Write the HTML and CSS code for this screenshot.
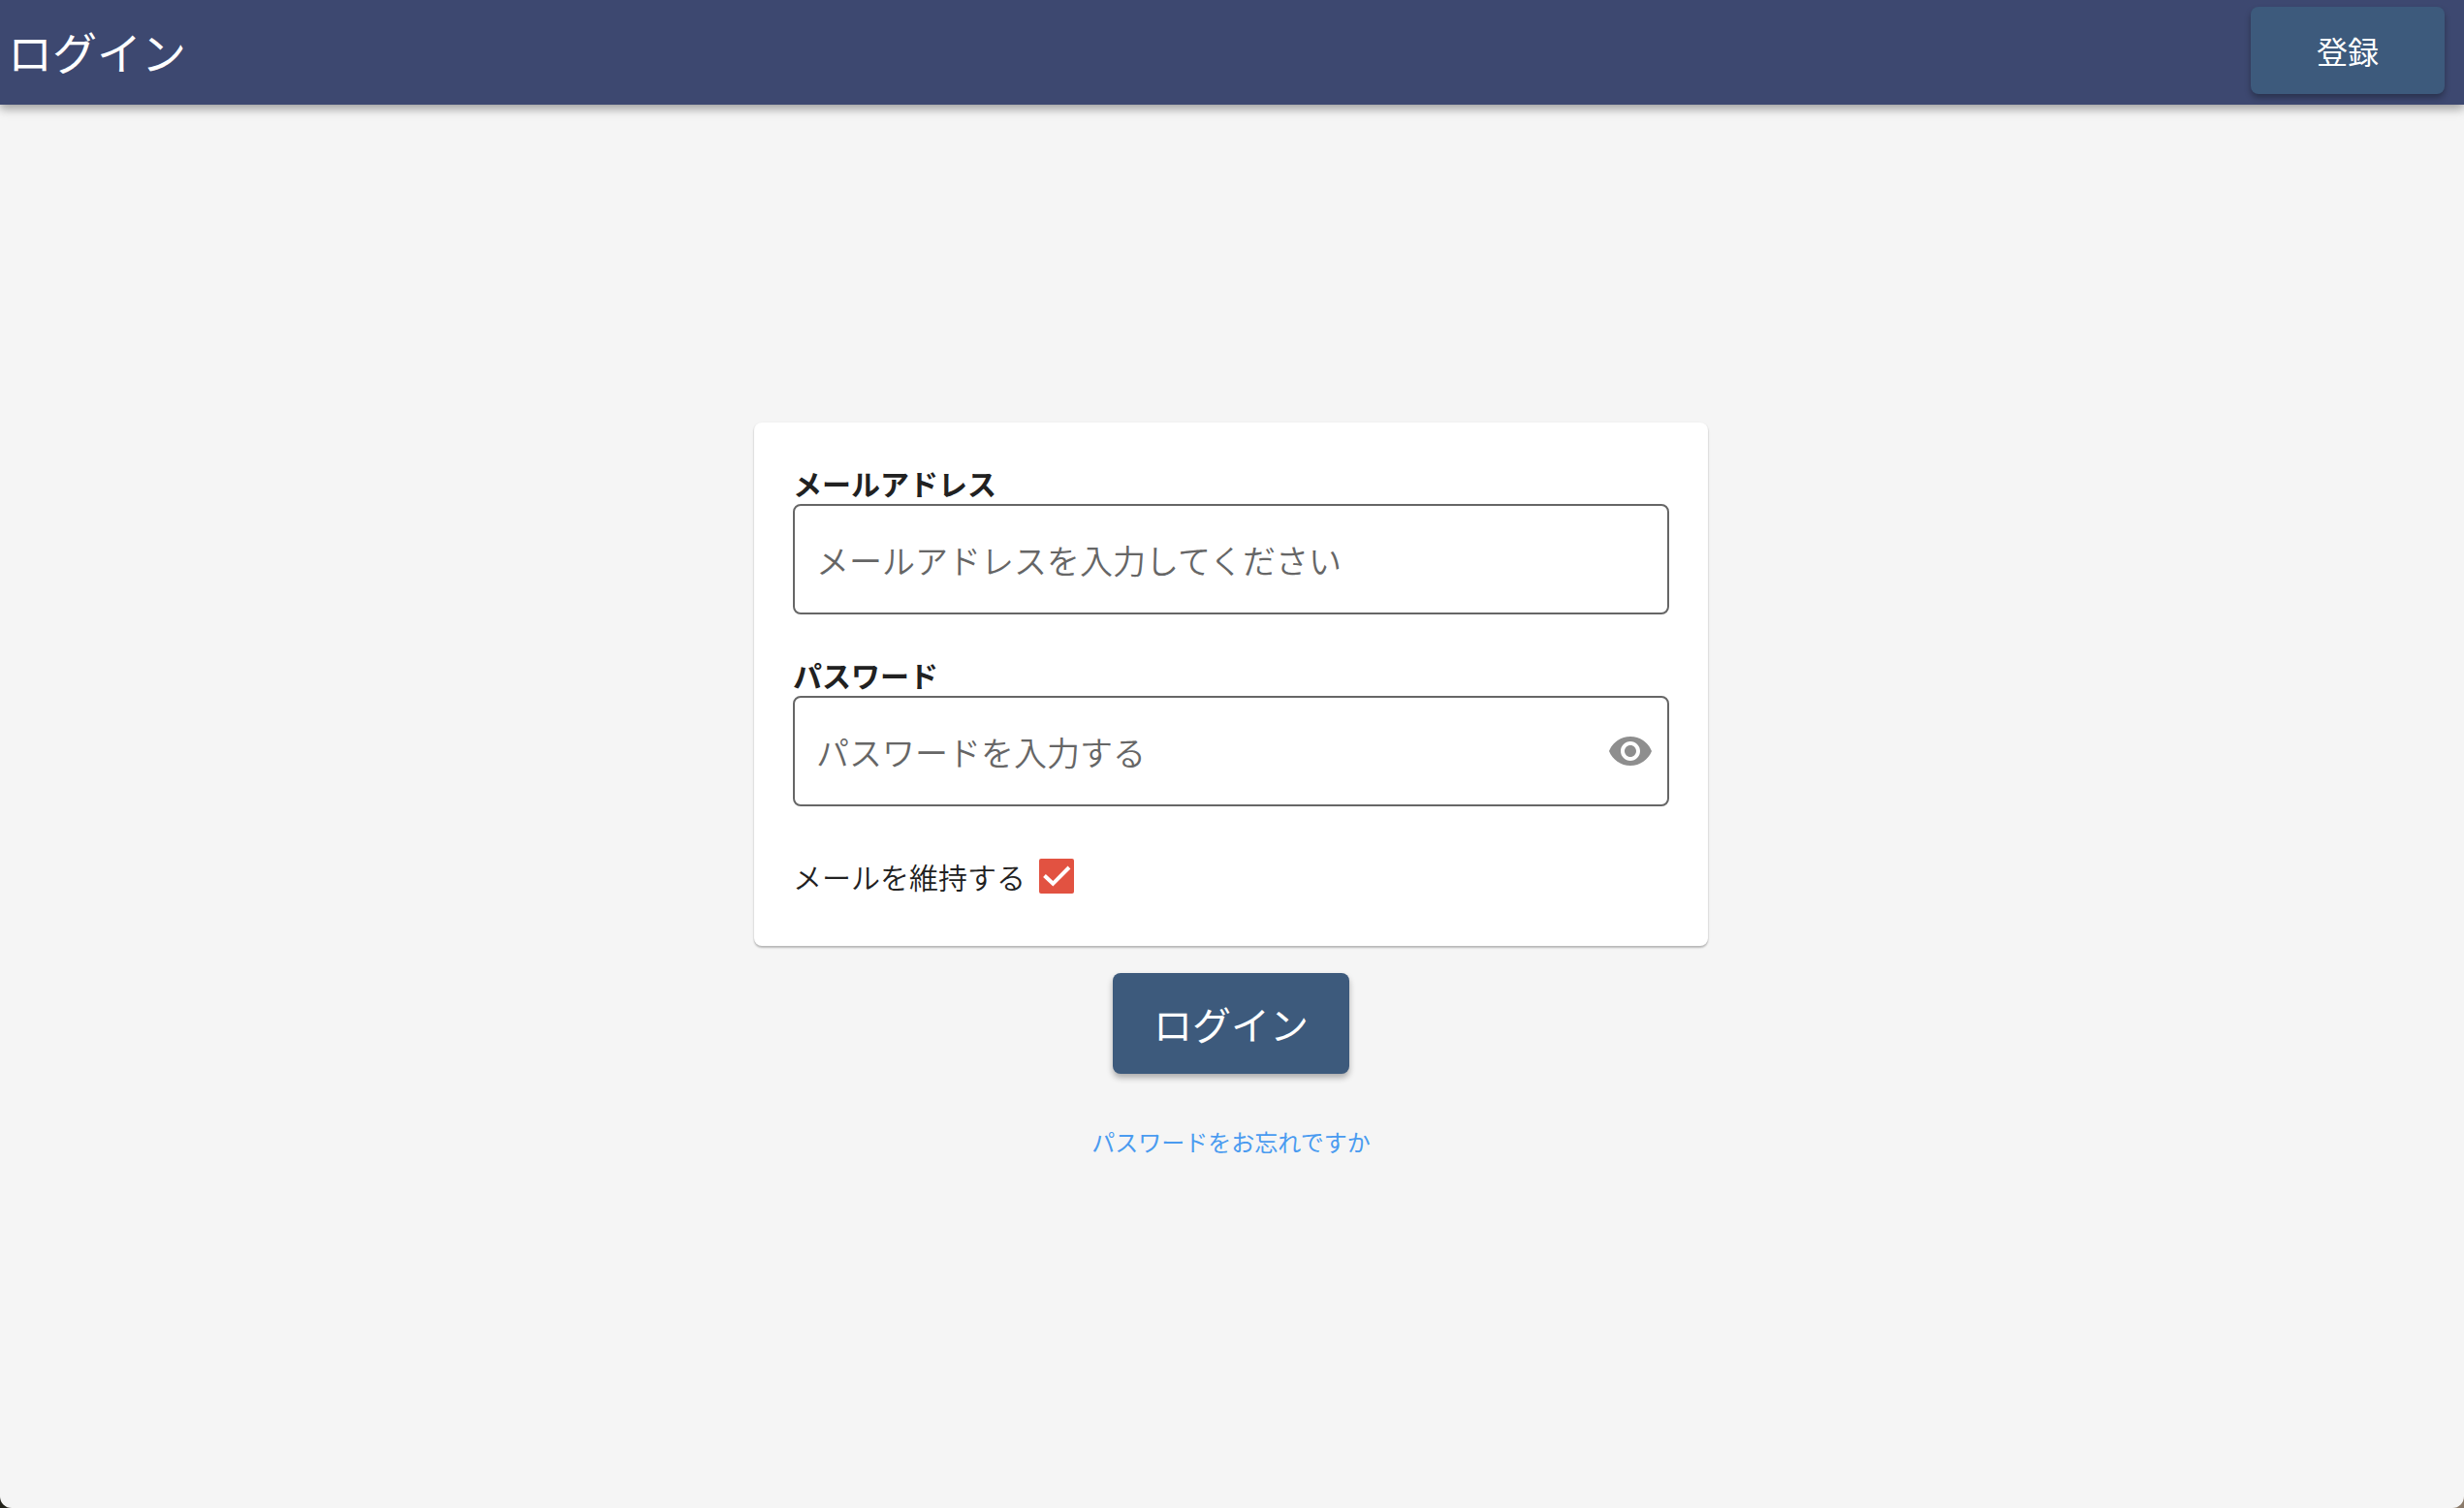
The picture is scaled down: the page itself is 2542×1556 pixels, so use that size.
FILE: index.html
```html
<!DOCTYPE html>
<html lang="ja">
<head>
  <meta charset="UTF-8">
  <meta name="viewport" content="width=device-width, initial-scale=1">
  <title>ログイン</title>
  <link rel="stylesheet" href="styles.css">
</head>
<body>
  <header class="toolbar">
    <h1>ログイン</h1>
    <button type="button" class="btn register-btn">登録</button>
  </header>

  <main>
    <form class="login-form">
      <section class="card">
        <!-- Email -->
        <div class="field">
          <label for="email">メールアドレス</label>
          <input type="email" id="email" placeholder="メールアドレスを入力してください">
        </div>

        <!-- Password -->
        <div class="field">
          <label for="password">パスワード</label>
          <div class="password-box">
            <input type="password" id="password" placeholder="パスワードを入力する">
            <button type="button" class="eye-btn" aria-label="パスワードを表示">
              <svg viewBox="0 0 24 24" aria-hidden="true">
                <path d="M12 4.500C7 4.500 2.730 7.610 1 12c1.730 4.390 6 7.500 11 7.500s9.270-3.110 11-7.500c-1.730-4.390-6-7.500-11-7.500zM12 17c-2.760 0-5-2.240-5-5s2.240-5 5-5 5 2.240 5 5-2.240 5-5 5zm0-8c-1.660 0-3 1.340-3 3s1.340 3 3 3 3-1.340 3-3-1.340-3-3-3z"/>
              </svg>
            </button>
          </div>
        </div>

        <!-- Remember email -->
        <div class="keep-row">
          <label for="keep">メールを維持する</label>
          <span class="checkbox">
            <input type="checkbox" id="keep" checked>
            <svg viewBox="0 0 36 36" aria-hidden="true">
              <path d="M5.500 17.500l8.800 8.300L31 9"/>
            </svg>
          </span>
        </div>
      </section>

      <button type="submit" class="btn login-btn">ログイン</button>
      <a class="forgot" href="#">パスワードをお忘れですか</a>
    </form>
  </main>
</body>
</html>
```

FILE: styles.css
```css
* {
  box-sizing: border-box;
}

html {
  background: linear-gradient(90deg, #22221a 50%, #8a7a6a 50%);
}

body {
  display: flex;
  flex-direction: column;
  min-height: 100vh;
  margin: 0;
  background: #f5f5f5;
  border-radius: 0 0 12px 12px;
  color: #212121;
  font-family: "Noto Sans CJK JP", sans-serif;
}

button,
input {
  font-family: inherit;
}

.toolbar {
  display: flex;
  align-items: center;
  justify-content: space-between;
  height: 108px;
  padding: 0 20px 4px 8px;
  background: #3d4870;
  color: #fff;
  box-shadow: 0 4px 8px rgba(0, 0, 0, 0.2), 0 4px 12px rgba(0, 0, 0, 0.2);
}

.toolbar h1 {
  margin: 0;
  font-size: 46px;
  font-weight: 400;
  line-height: 64px;
}

.btn {
  border: none;
  border-radius: 8px;
  background: #3d5a7c;
  color: #fff;
  box-shadow: 0 4px 6px rgba(0, 0, 0, 0.3);
  cursor: pointer;
}

.register-btn {
  width: 200px;
  height: 90px;
  font-size: 32px;
}

main {
  display: flex;
  flex: 1;
  align-items: center;
  justify-content: center;
  padding-right: 2px;
}

.login-form {
  display: flex;
  flex-direction: column;
  align-items: center;
  width: 100%;
  max-width: 984px;
  padding-bottom: 32px;
}

.card {
  display: flex;
  flex-direction: column;
  gap: 40px;
  width: 100%;
  padding: 40px;
  border-radius: 8px;
  background: #fff;
  box-shadow: 0 2px 2px rgba(0, 0, 0, 0.2), 0 1px 3px rgba(0, 0, 0, 0.1);
}

.field label {
  display: block;
  font-size: 30px;
  font-weight: 700;
  line-height: 44px;
}

.field input {
  display: block;
  width: 100%;
  height: 114px;
  padding: 0 22px;
  border: 2px solid #666;
  border-radius: 8px;
  background: #fff;
  color: #212121;
  font-size: 34px;
  font-weight: 350;
}

.field input::placeholder {
  color: #666;
  opacity: 1;
}

.password-box {
  position: relative;
}

/* sits over the right end of the password input */
.eye-btn {
  position: absolute;
  top: 0;
  right: 16px;
  display: flex;
  align-items: center;
  height: 100%;
  padding: 0;
  border: none;
  background: none;
  cursor: pointer;
}

.eye-btn svg {
  width: 48px;
  height: 48px;
  fill: #8e8e8e;
}

.keep-row {
  display: flex;
  align-items: center;
  gap: 14px;
  height: 64px;
  font-size: 30px;
  font-weight: 350;
}

.checkbox {
  display: grid;
}

.checkbox input,
.checkbox svg {
  grid-area: 1 / 1;
  width: 36px;
  height: 36px;
  margin: 0;
}

.checkbox input {
  appearance: none;
  border: 2px solid #666;
  border-radius: 2px;
}

.checkbox input:checked {
  border-color: #e25241;
  background: #e25241;
}

.checkbox svg {
  fill: none;
  stroke: #fff;
  stroke-width: 4;
  pointer-events: none;
}

.login-btn {
  width: 244px;
  height: 104px;
  margin-top: 28px;
  font-size: 40px;
}

.forgot {
  margin-top: 52px;
  color: #4a9bf0;
  font-size: 24px;
  line-height: 36px;
  text-decoration: none;
}
```
